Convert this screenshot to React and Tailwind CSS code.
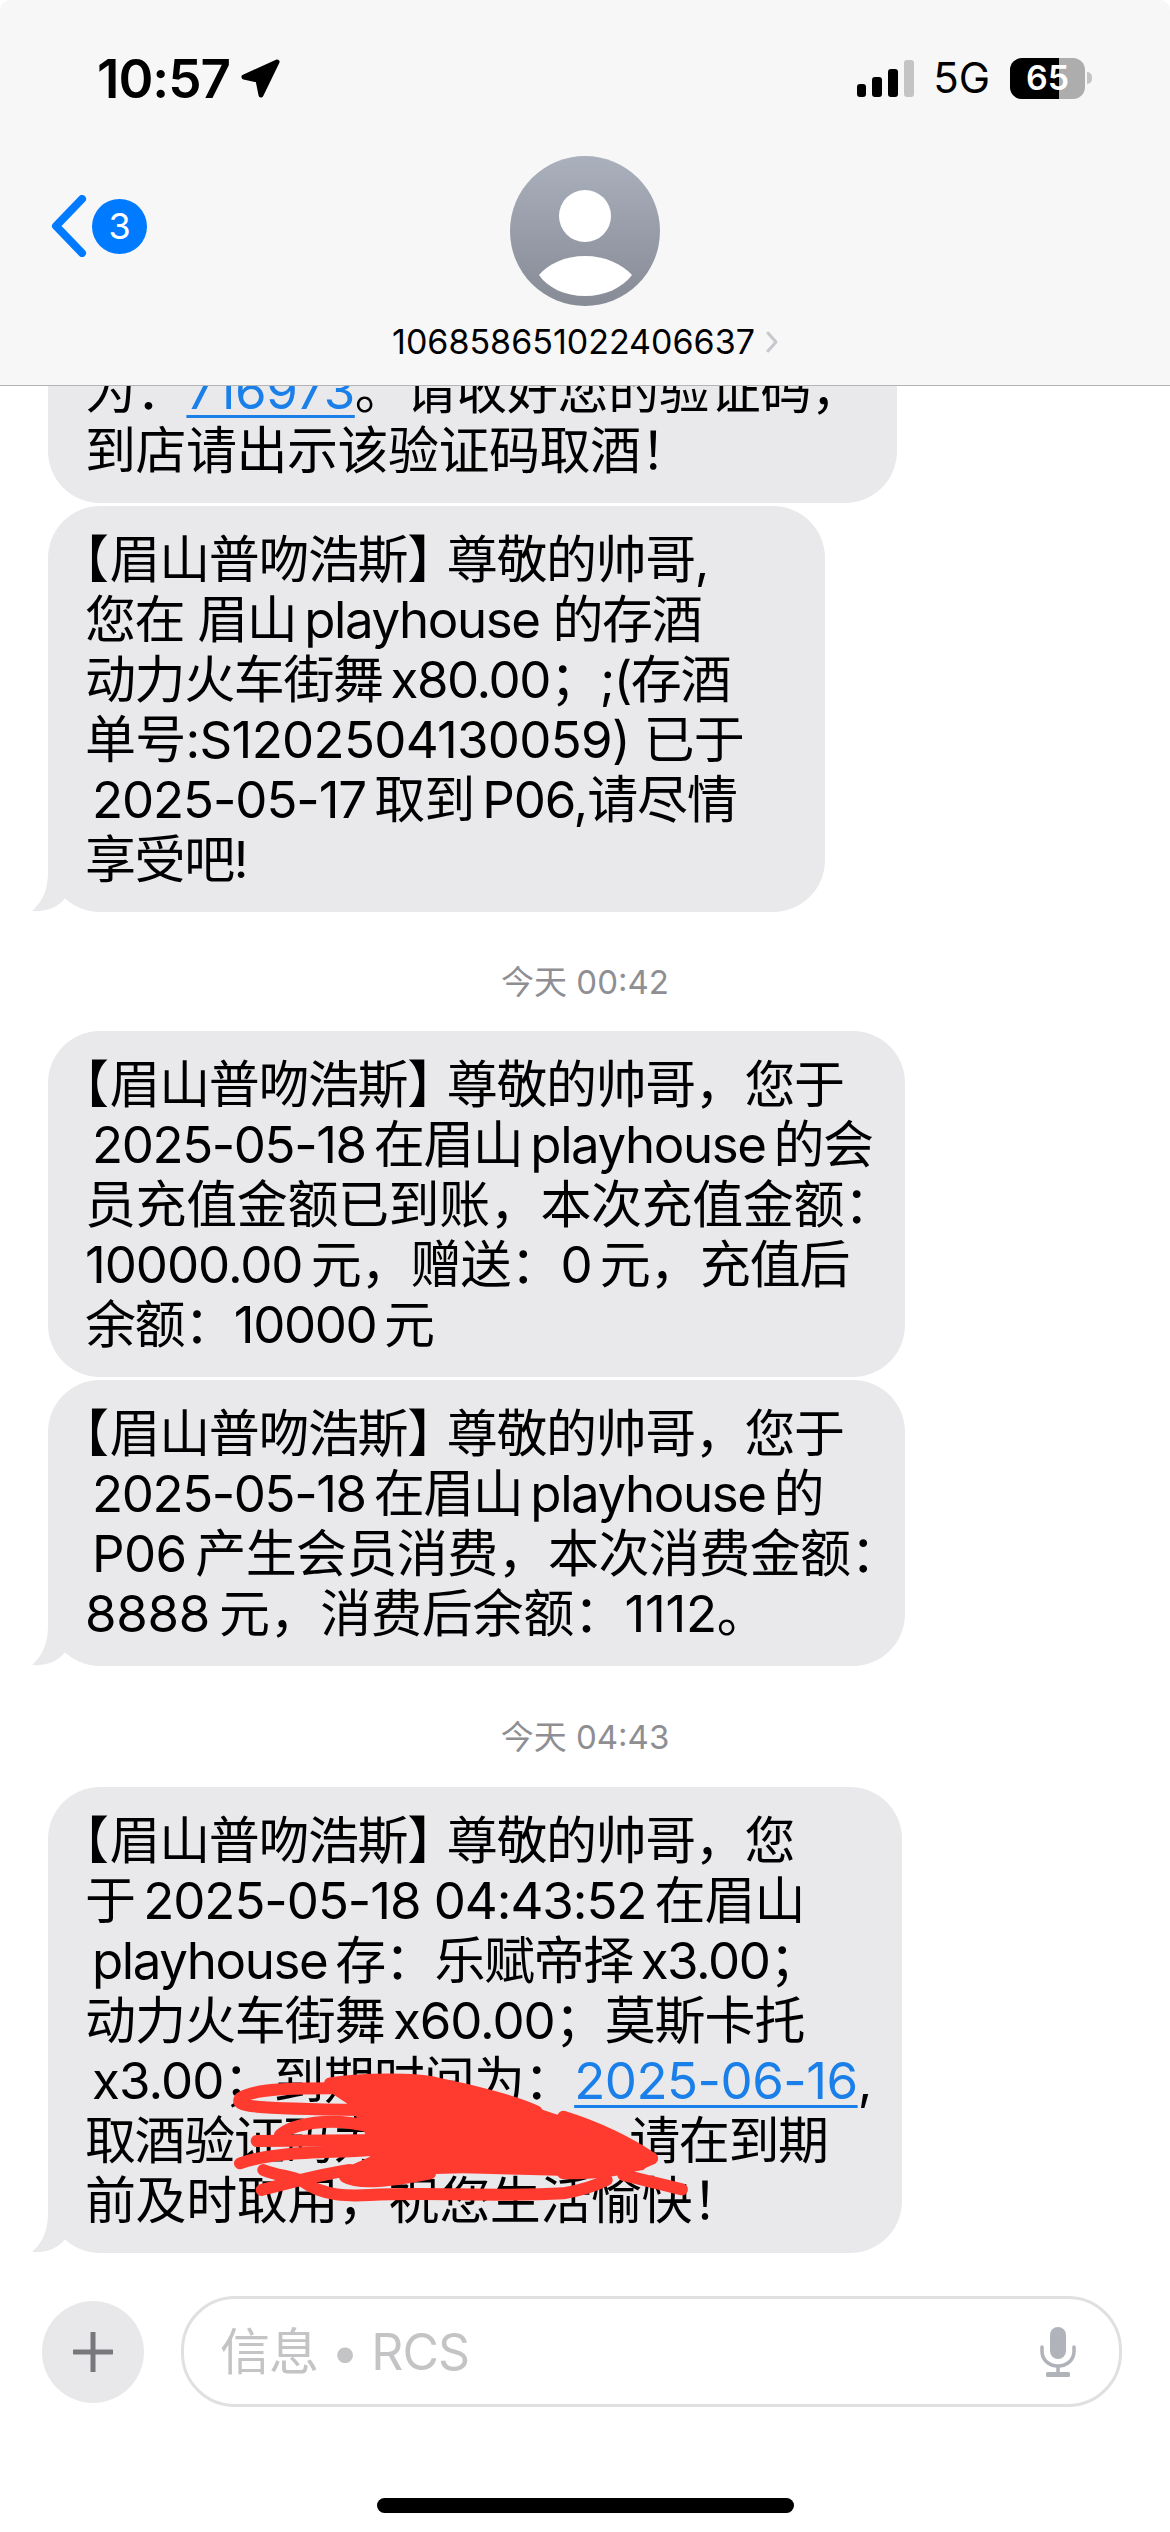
import React from "react";

const Tail = () => (
  <svg className="absolute left-[-16px] bottom-0" width="50" height="60" viewBox="0 0 50 60">
    <path d="M16 0 L50 0 L50 46 C44 48 38 50 33 46 C27 55 14 60 0 59 C10 50 16 38 16 20 Z" fill="#e9e9eb" />
  </svg>
);

const Bubble = ({ width, lines, tail, children }) => (
  <div className={`relative ${width} rounded-[52px] bg-[#e9e9eb] pl-[37px] pt-[24px] pb-[22px] text-[51px] leading-[60px] tracking-[-1.4px] text-black`}>
    {tail && <Tail />}
    {lines.map((line, i) => (
      <div key={i} className="whitespace-nowrap">{line}</div>
    ))}
    {children}
  </div>
);

// the brackets are set half width in the original, so they get pulled in
const Title = () => (
  <>
    <span className="ml-[-27px] mr-[2px]">{"\u3010"}</span>
    <span>{"眉山普吻浩斯"}</span>
    <span className="tracking-[-11.4px]">{"\u3011"}</span>
  </>
);

const Stamp = ({ height, text }) => (
  <div className={`flex ${height} items-center justify-center pt-[23px] text-[33px] text-[#8e8e93]`}>{text}</div>
);

const Link = ({ children }) => (
  <span className="tracking-[-0.5px] text-[#1a7fe8] underline decoration-[3px] underline-offset-[6px]">{children}</span>
);

const Scribble = () => (
  <svg className="absolute left-[182px] top-[273px]" width="480" height="160" viewBox="0 0 1440 480">
    <path
      d="M290 70 L560 60 L700 90 L880 130 L1000 170 L1100 200 L1170 230 L1280 295 L1240 330 L1100 350 L900 345 L700 340 L500 345 L340 360 L330 330 L420 290 L400 200 L350 130 L290 90 Z"
      fill="#ff3b30"
    />
    <g fill="none" stroke="#ff3b30" strokeWidth="36" strokeLinecap="round" strokeLinejoin="round">
      <path d="M300 85 C200 85 70 85 30 115 C15 140 60 145 400 150" />
      <path d="M300 70 C400 55 560 55 620 70 C720 90 860 125 920 155" />
      <path d="M80 243 L500 240" />
      <path d="M150 225 C190 190 300 170 420 200" />
      <path d="M30 310 C150 270 300 280 420 270" />
      <path d="M95 390 C170 370 260 345 360 330" />
      <path d="M100 330 C150 350 180 345 220 365 C280 410 360 408 420 405 C600 395 800 412 1000 400 C1060 390 1100 375 1130 360" />
      <path d="M1180 345 L1356 388" />
      <path d="M345 350 C380 370 450 370 600 340" />
      <path d="M1000 170 C1100 200 1200 250 1266 295" />
      <path d="M1266 295 C1200 330 1100 340 1000 340" />
    </g>
  </svg>
);

const StatusBar = () => (
  <div className="flex h-[156px] items-start justify-between pl-[97px] pr-[78px] pt-[57px]">
    <div className="flex items-center gap-[11px]">
      <span className="text-[53px] font-semibold leading-[44px] tracking-[-1px] text-black">10:57</span>
      <svg width="41" height="40" viewBox="0 0 41 40">
        <path d="M36 3 L3 18 L17 21 L20 36 Z" fill="#000" stroke="#000" strokeWidth="5" strokeLinejoin="round" />
      </svg>
    </div>
    <div className="flex items-center">
      <div className="flex h-[37px] items-end gap-[6px]">
        <div className="h-[13px] w-[9px] rounded-[3px] bg-black" />
        <div className="h-[20px] w-[10px] rounded-[3px] bg-black" />
        <div className="h-[28px] w-[10px] rounded-[3px] bg-black" />
        <div className="h-[37px] w-[10px] rounded-[3px] bg-[#c4c4c4]" />
      </div>
      <span className="ml-[19px] text-[42px] font-normal leading-[42px] text-black">5G</span>
      <div className="relative ml-[20px] flex h-[41px] w-[75px] overflow-hidden rounded-[12px] bg-[#adadad]">
        <div className="h-full w-[49px] bg-black" />
        <span className="absolute inset-0 flex items-center justify-center text-[34px] font-semibold leading-none text-white">65</span>
      </div>
      <div className="ml-[2px] h-[12px] w-[5px] rounded-r-full bg-[#c4c4c4]" />
    </div>
  </div>
);

const Header = () => (
  <div className="relative z-10 h-[386px] bg-white">
    <div className="h-[385px] rounded-t-[10px] bg-[#f7f7f7]">
      <StatusBar />
      <div className="relative flex flex-col items-center">
        <svg width="150" height="150" viewBox="0 0 150 150">
          <defs>
            <linearGradient id="avatarFill" x1="0" y1="0" x2="0" y2="1">
              <stop offset="0" stopColor="#aab0bc" />
              <stop offset="1" stopColor="#868b96" />
            </linearGradient>
          </defs>
          <circle cx="75" cy="75" r="75" fill="url(#avatarFill)" />
          <circle cx="75" cy="60" r="26" fill="#fff" />
          <path d="M29 119 C38 108 55 100 75 100 C95 100 112 108 122 119 C112 132 95 140 75 140 C55 140 38 132 29 119Z" fill="#fff" />
        </svg>
        <div className="mt-[16px] flex items-center">
          <span className="text-[34px] leading-[40px] text-black">106858651022406637</span>
          <svg className="ml-[11px]" width="12" height="22" viewBox="0 0 12 22">
            <path d="M2 2 L10 11 L2 20" fill="none" stroke="#c7c7cc" strokeWidth="3" strokeLinecap="round" strokeLinejoin="round" />
          </svg>
        </div>
        <div className="absolute left-[51px] top-[39px] flex items-center">
          <svg width="36" height="62" viewBox="0 0 36 62">
            <path d="M31 4 L5 31 L31 58" fill="none" stroke="#007aff" strokeWidth="8" strokeLinecap="round" strokeLinejoin="round" />
          </svg>
          <div className="ml-[5px] flex h-[55px] w-[55px] items-center justify-center rounded-full bg-[#007aff] text-[36px] leading-none text-white">3</div>
        </div>
      </div>
    </div>
    <div className="h-px bg-[#b4b4b4]" />
  </div>
);

const InputBar = () => (
  <div className="mt-[43px] flex items-center pl-[42px] pr-[48px]">
    <div className="flex h-[102px] w-[102px] items-center justify-center rounded-full bg-[#e8e8ea]">
      <svg width="40" height="40" viewBox="0 0 40 40">
        <path d="M20 1 V39 M1 20 H39" stroke="#77777c" strokeWidth="5" strokeLinecap="round" />
      </svg>
    </div>
    <div className="ml-[37px] flex h-[111px] flex-1 items-center justify-between rounded-[54px] border-[3px] border-[#e0e0e0] pl-[36px] pr-[43px]">
      <span className="text-[50px] leading-[60px] tracking-[-1px] text-[#c4c4c6]">{"信息 • RCS"}</span>
      <svg width="36" height="50" viewBox="0 0 36 50">
        <rect x="10" y="0" width="16" height="32" rx="8" fill="#b0b3b9" />
        <path d="M2 20 V24 C2 33 9 39 18 39 C27 39 34 33 34 24 V20" fill="none" stroke="#b0b3b9" strokeWidth="3.5" strokeLinecap="round" />
        <path d="M18 39 V47" stroke="#b0b3b9" strokeWidth="3.5" />
        <rect x="6" y="45" width="24" height="5" rx="1.5" fill="#b0b3b9" />
      </svg>
    </div>
  </div>
);

export default function App() {
  return (
    <div className="h-[2532px] w-[1170px] overflow-hidden bg-white font-['Inter','Noto_Sans_CJK_SC',sans-serif]" lang="zh-CN">
      <Header />
      <div className="mt-[-49px] flex flex-col items-start gap-[3px] pl-[48px]">
        <Bubble
          width="w-[849px]"
          lines={[
            <span className="tracking-[-0.3px]">{"为\uFF1A"}<Link>716973</Link>{"\u3002请收好您的验证码\uFF0C"}</span>,
            <span className="tracking-[-0.5px]">{"到店请出示该验证码取酒\uFF01"}</span>,
          ]}
        />
        <Bubble
          width="w-[777px]"
          tail
          lines={[
            <><Title />{"尊敬的帅哥,"}</>,
            "您在 眉山\u2009playhouse 的存酒",
            "动力火车街舞\u2009x80.00\uFF1B;(存酒",
            <span className="tracking-[-0.7px]">{"单号:S1202504130059) 已于"}</span>,
            <span className="ml-[7px] tracking-[-1.1px]">{"2025-05-17\u2009取到\u2009P06,请尽情"}</span>,
            "享受吧!",
          ]}
        />
      </div>
      <Stamp height="h-[119px]" text="今天 00:42" />
      <div className="flex flex-col items-start gap-[3px] pl-[48px]">
        <Bubble
          width="w-[857px]"
          lines={[
            <><Title />{"尊敬的帅哥\uFF0C您于"}</>,
            <span className="ml-[7px]">{"2025-05-18\u2009在眉山\u2009playhouse\u2009的会"}</span>,
            <span className="tracking-[-0.4px]">{"员充值金额已到账\uFF0C本次充值金额\uFF1A"}</span>,
            <span className="tracking-[-1.05px]">{"10000.00\u2009元\uFF0C赠送\uFF1A0\u2009元\uFF0C充值后"}</span>,
            "余额\uFF1A10000\u2009元",
          ]}
        />
        <Bubble
          width="w-[857px]"
          tail
          lines={[
            <><Title />{"尊敬的帅哥\uFF0C您于"}</>,
            <span className="ml-[7px]">{"2025-05-18\u2009在眉山\u2009playhouse\u2009的"}</span>,
            <span className="ml-[7px] tracking-[-0.6px]">{"P06\u2009产生会员消费\uFF0C本次消费金额\uFF1A"}</span>,
            <span className="tracking-[-0.3px]">{"8888\u2009元\uFF0C消费后余额\uFF1A1112\u3002"}</span>,
          ]}
        />
      </div>
      <Stamp height="h-[121px]" text="今天 04:43" />
      <div className="pl-[48px]">
        <Bubble
          width="w-[854px]"
          tail
          lines={[
            <><Title />{"尊敬的帅哥\uFF0C您"}</>,
            <span className="tracking-[-1.05px]">{"于\u20092025-05-18 04:43:52\u2009在眉山"}</span>,
            <span className="ml-[7px]">{"playhouse\u2009存\uFF1A乐赋帝择\u2009x3.00\uFF1B"}</span>,
            <span className="tracking-[-1.05px]">{"动力火车街舞\u2009x60.00\uFF1B莫斯卡托"}</span>,
            <span className="ml-[7px] tracking-[-0.9px]">{"x3.00\uFF1B到期时间为\uFF1A"}<Link>2025-06-16</Link>,</span>,
            <>{"取酒验证码为\uFF1A"}<span className="inline-block w-[197px]" />{"请在到期"}</>,
            <span className="tracking-[-0.4px]">{"前及时取用\uFF0C祝您生活愉快\uFF01"}</span>,
          ]}
        >
          <Scribble />
        </Bubble>
      </div>
      <InputBar />
      <div className="mx-auto mt-[91px] h-[15px] w-[417px] rounded-full bg-black" />
    </div>
  );
}
